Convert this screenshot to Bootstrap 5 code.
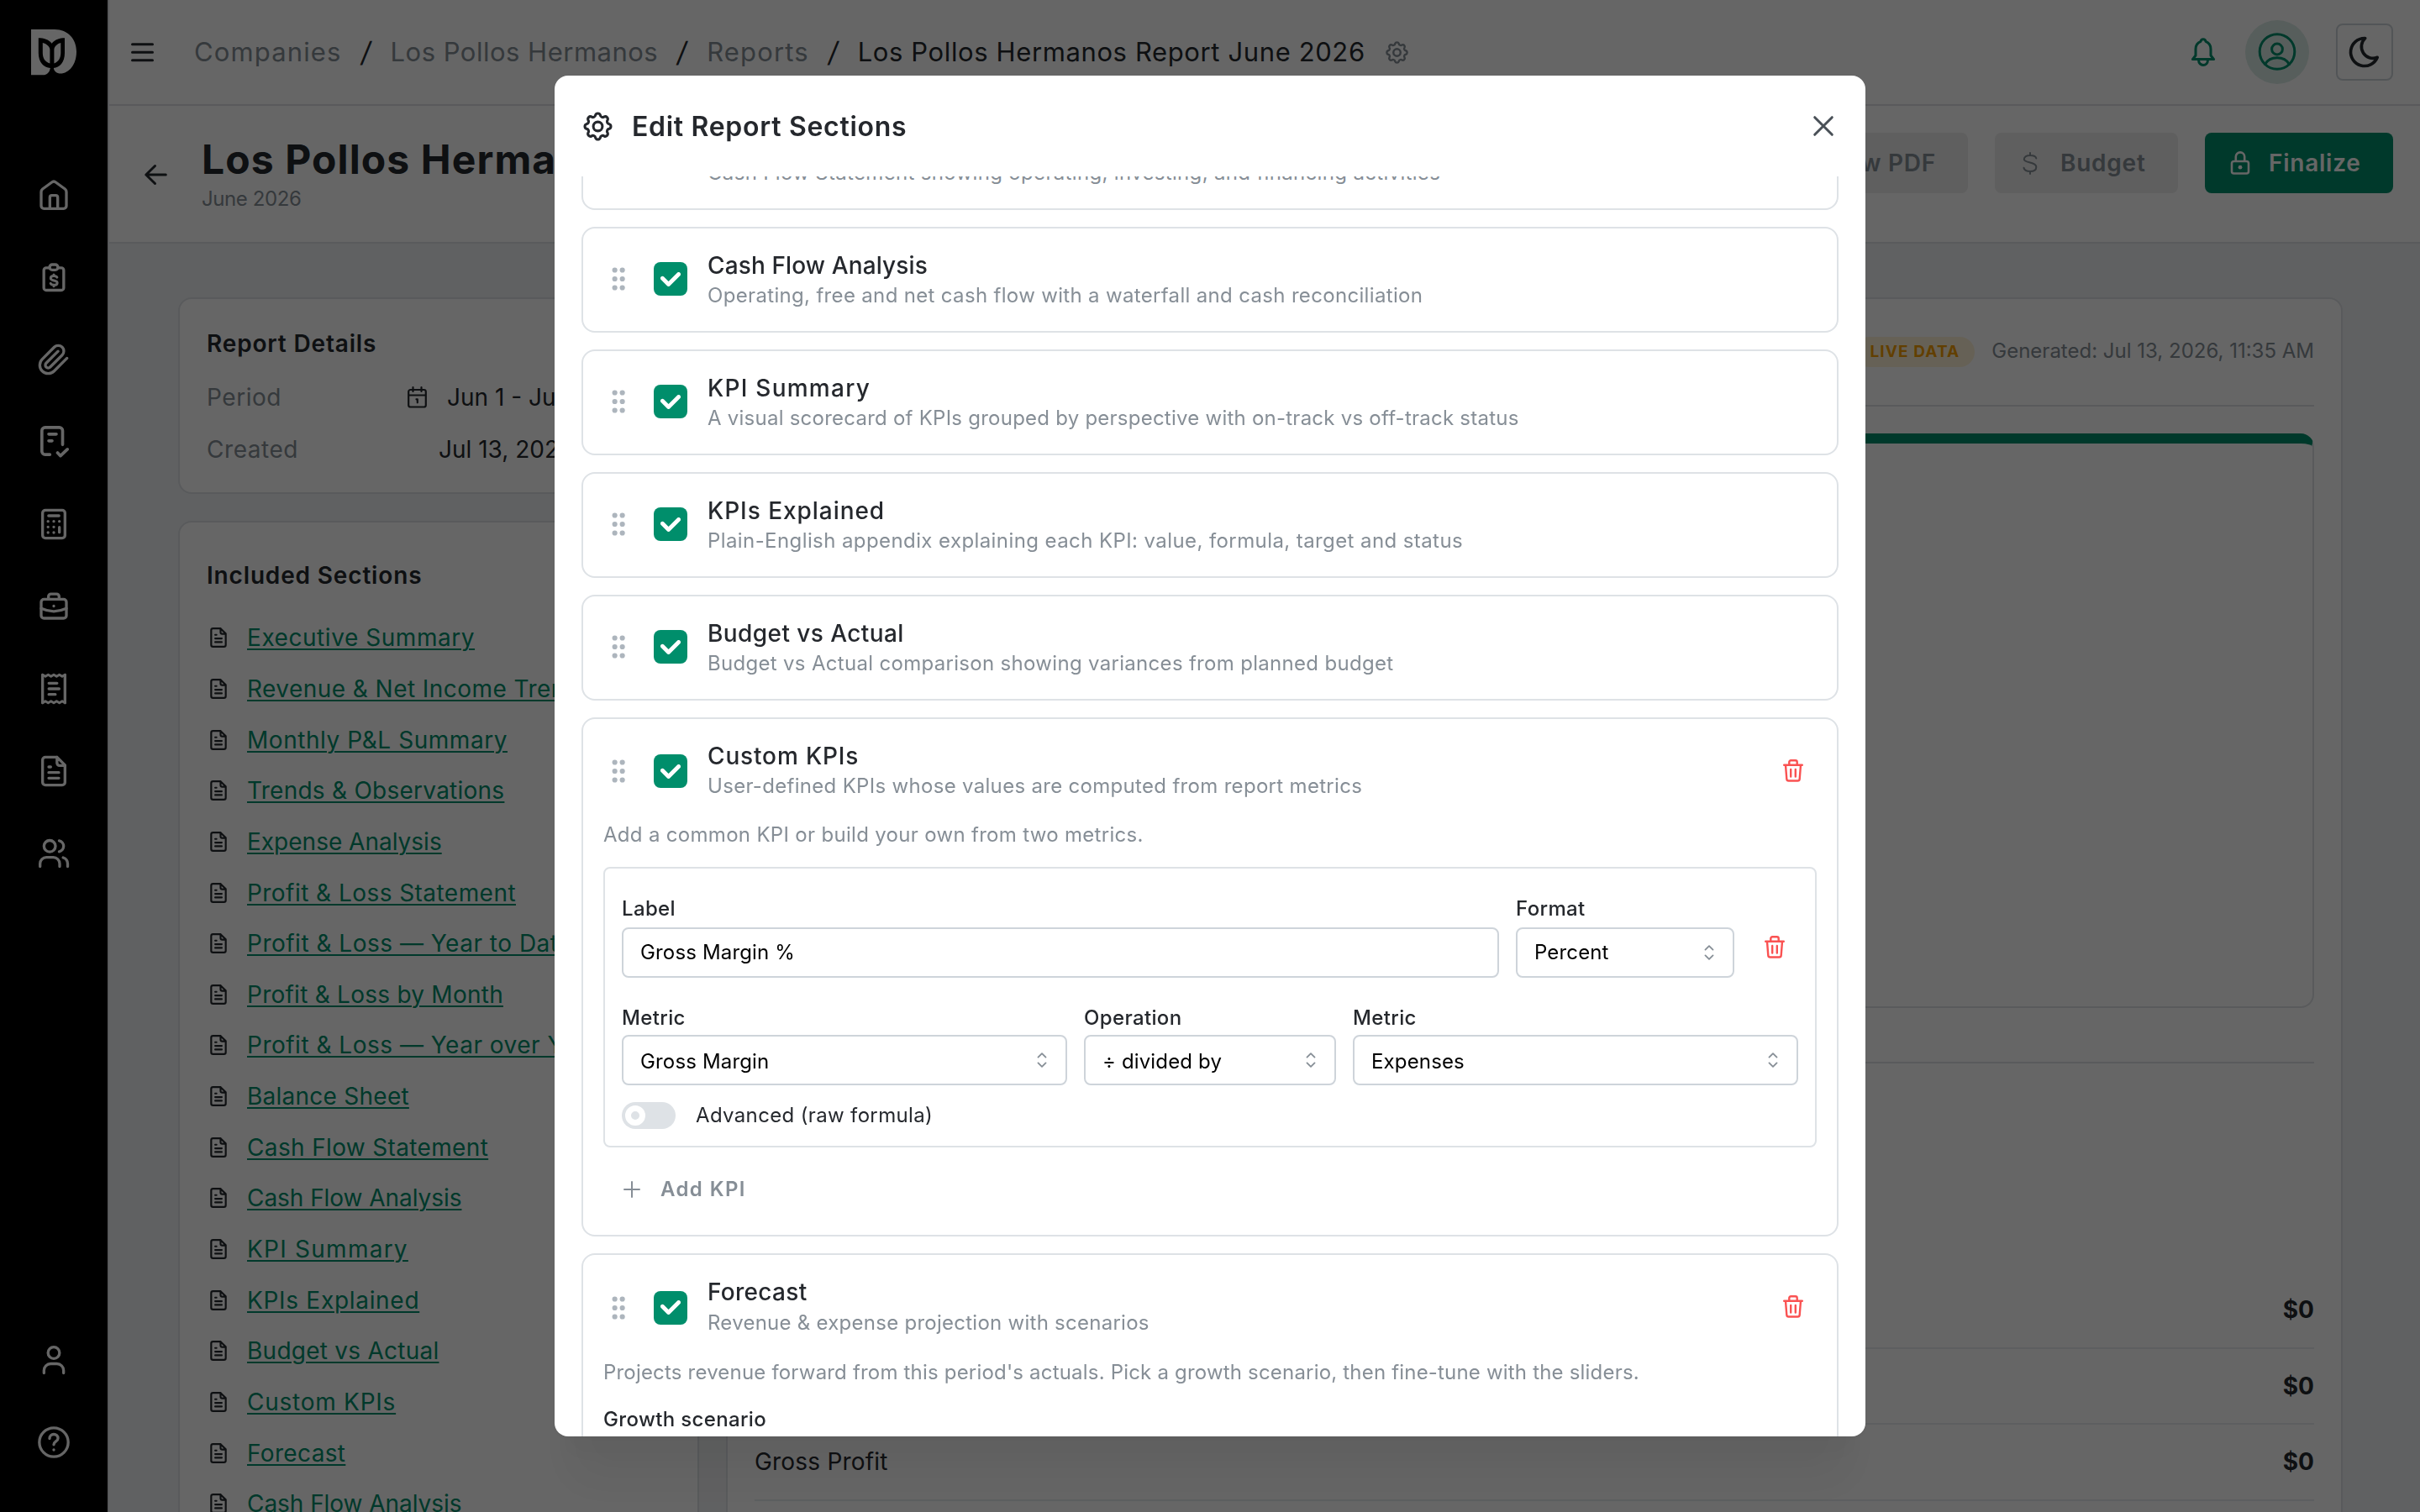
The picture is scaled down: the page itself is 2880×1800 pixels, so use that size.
<!DOCTYPE html>
<html lang="en">
<head>
<meta charset="utf-8">
<title>Los Pollos Hermanos Report June 2026</title>
<link rel="stylesheet" href="https://cdn.jsdelivr.net/npm/bootstrap@5.3.0/dist/css/bootstrap.min.css">
<style>
:root{--green:#008e6b;--ink:#25282d;--dim:#868e96;--line:#dee2e6;--field:#ced4da}
body{font-family:Inter,"Noto Sans",sans-serif;font-size:28px;line-height:36px;letter-spacing:.55px;color:var(--ink);height:1800px;overflow:hidden}
svg{flex:none;fill:none;stroke:currentColor;stroke-width:2;stroke-linecap:round;stroke-linejoin:round;overflow:visible}
.txt-dim{color:var(--dim)}
.shell{height:1800px}
.side{width:130px;background:#000;color:#fff;border-right:2px solid var(--line);padding:35px 0 63px}
.side-nav{width:128px;gap:58px}
.side-nav svg{width:40px;height:40px}
.topbar{height:126px;border-bottom:2px solid var(--line);padding:0 32px 0 26px;background:#fff}
.crumbs{font-size:31px;letter-spacing:1.13px;margin-left:48px}
.crumbs .sep{width:58px;text-align:center;letter-spacing:0;font-size:33px;transform:skewX(-8deg)}
.avatar-disc{width:76px;height:76px;border-radius:50%;background:#d9ebe6;color:var(--green)}
.moon-btn{width:68px;height:68px;border:2px solid var(--field);border-radius:8px}
.titlebar{height:164px;border-bottom:2px solid var(--line);padding:32px 32px 0 42px;background:#fff}
.report-title{font-size:48px;line-height:60px;font-weight:700;letter-spacing:1.1px;margin:0}
.btn-lg2{height:72px;border:0;border-radius:8px;padding:0 38px 0 30px;font-size:28px;font-weight:600;letter-spacing:.75px;display:flex;align-items:center}
.btn-quiet{background:#ededed;color:var(--dim)}
.btn-brand{background:var(--green);color:#fff}
.canvas{flex:1 1 0;min-height:0;background:#f1f3f5;padding:64px 92px 0 82px;gap:32px;overflow:hidden}
.panel{background:#fff;border:2px solid var(--line);border-radius:16px;padding:0 32px}
.left-col{width:620px;gap:32px}
.panel-title{font-weight:600;letter-spacing:.84px}
.sec-row{height:60.65px;gap:21px;padding-left:1px}
.sec-row a{color:var(--green);text-decoration:underline;text-decoration-thickness:2px;text-underline-offset:3px;white-space:nowrap}
.live-tag{height:36px;border-radius:18px;background:#fff3d6;color:#f59f00;font-size:19px;font-weight:700;letter-spacing:1.1px;padding:0 18px;line-height:36px}
.small-dim{font-size:24px;letter-spacing:0;color:var(--dim)}
.chart-box{height:684px;border:2px solid var(--line);border-top:12px solid var(--green);border-radius:16px}
.sum-row{height:90.6px;border-bottom:2px solid #e9ecef}
.sum-row b{letter-spacing:0}
.dlg-layer{background:rgba(0,0,0,.6)}
.dlg-layer .modal-dialog{width:1560px;max-width:1560px;height:1620px;margin:90px auto 0}
.dlg-layer .modal-content{height:1620px;border:0;border-radius:16px;overflow:hidden;color:var(--ink)}
.dlg-shade{border-radius:16px;box-shadow:0 2px 6px rgba(0,0,0,.05),0 72px 56px -14px rgba(0,0,0,.05),0 34px 34px -14px rgba(0,0,0,.04)}
.dlg-head{height:120px;padding:0 38px 0 33px;flex:none}
.dlg-title{font-size:32px;font-weight:600;letter-spacing:.7px;margin-left:22px;padding-top:2px}
.dlg-scroll{flex:1 1 0;min-height:0;overflow:hidden;padding:0 32px}
.dlg-list{gap:20px;margin-top:-86px}
.sect{border:2px solid var(--line);border-radius:16px;padding:26px 24px;flex:none;background:#fff}
.sect-plain{height:126px}
.grip{width:36px;height:36px;color:#adb5bd;fill:currentColor;stroke:none}
.tick{width:40px;height:40px;border-radius:8px;background:var(--green);color:#fff}
.tick svg{fill:currentColor;stroke:none;width:24px;height:17px}
.sect-name{font-weight:500;letter-spacing:.18px;line-height:37px}
.sub{font-size:24px;line-height:32px;letter-spacing:.31px;color:var(--dim)}
.sect-name+.sub{margin-top:1px}
.head-row{gap:24px}
.head-row .grip,.head-row .tick{margin-bottom:2px}
.wide-head .grip,.wide-head .tick{margin:2px 0 0}
.bin{width:56px;color:#fa5252}
.kpi-box{border:2px solid var(--line);border-radius:8px;height:334px;padding:30px 20px 0;margin-top:22px}
.fl{font-size:24px;font-weight:500;letter-spacing:.35px;display:block}
.fld{height:60px;border:2px solid var(--field);border-radius:8px;padding:0 22px 0 20px;font-size:24px;letter-spacing:.15px;color:#000}
.fld svg{width:12px;height:18px;color:var(--dim);stroke-width:1.8}
.w-metric{width:530px}.w-op{width:300px}.w-fmt{width:260px}.w-label{width:1044px}
.row-a .fl{margin-bottom:4px}.row-b .fl{margin-bottom:2px}
.row-b{margin-top:30px}.row-b .fld{padding-top:3px}.row-b .fld svg{margin-top:-3px}
.sw{width:64px;height:32px;border-radius:16px;background:var(--line);padding:0 4px}
.sw i{width:24px;height:24px;border-radius:50%;border:7px solid #fff;background:var(--line)}
.add-kpi{font-size:24px;font-weight:600;letter-spacing:1.4px;color:var(--dim);height:100px;padding-left:24px;gap:24px}
</style>
<script src="https://cdn.jsdelivr.net/npm/bootstrap@5.3.0/dist/js/bootstrap.bundle.min.js"></script>
</head>
<body>
<svg width="0" height="0" class="position-absolute">
  <symbol id="gear" viewBox="0 0 24 24"><path d="M10.15 3.29A1.95 1.95 0 0 1 13.85 3.29A1.9 1.9 0 0 0 16.85 4.54A1.95 1.95 0 0 1 19.46 7.15A1.9 1.9 0 0 0 20.71 10.15A1.95 1.95 0 0 1 20.71 13.85A1.9 1.9 0 0 0 19.46 16.85A1.95 1.95 0 0 1 16.85 19.46A1.9 1.9 0 0 0 13.85 20.71A1.95 1.95 0 0 1 10.15 20.71A1.9 1.9 0 0 0 7.15 19.46A1.95 1.95 0 0 1 4.54 16.85A1.9 1.9 0 0 0 3.29 13.85A1.95 1.95 0 0 1 3.29 10.15A1.9 1.9 0 0 0 4.54 7.15A1.95 1.95 0 0 1 7.15 4.54A1.9 1.9 0 0 0 10.15 3.29Z"/><circle cx="12" cy="12" r="3.5"/></symbol>
  <symbol id="doc" viewBox="0 0 24 24"><path d="M14.3 2H6a2 2 0 0 0-2 2v16a2 2 0 0 0 2 2h12a2 2 0 0 0 2-2V7.7L14.3 2v4.2A1.8 1.8 0 0 0 16.1 8H20M8.4 9h1.4M8.4 13h7.2M8.4 17h7.2"/></symbol>
  <symbol id="bin" viewBox="0 0 24 27"><path stroke-width="2.4" d="M1.2 6.8h21.6M7.3 6.8V3.2a2 2 0 0 1 2-2h5.4a2 2 0 0 1 2 2v3.6M3 6.8l1.3 16.6a2.3 2.3 0 0 0 2.3 2.1h10.8a2.3 2.3 0 0 0 2.3-2.1L21 6.8M9.2 12v8.5M14.8 12v8.5"/></symbol>
  <symbol id="grip" viewBox="0 0 24 24"><circle cx="9.1" cy="5" r="2.05"/><circle cx="9.1" cy="12" r="2.05"/><circle cx="9.1" cy="19" r="2.05"/><circle cx="15.1" cy="5" r="2.05"/><circle cx="15.1" cy="12" r="2.05"/><circle cx="15.1" cy="19" r="2.05"/></symbol>
  <symbol id="check" viewBox="0 0 10 7"><path d="M4 4.586L1.707 2.293A1 1 0 1 0 .293 3.707l3 3a.997.997 0 0 0 1.414 0l5-5A1 1 0 1 0 8.293.293L4 4.586z"/></symbol>
  <symbol id="updown" viewBox="0 0 12 18"><path d="M1.5 5.6L6 1.2l4.5 4.4M1.5 12.4L6 16.8l4.5-4.4"/></symbol>
</svg>

<div class="shell d-flex">
  <aside class="side d-flex flex-column flex-shrink-0">
    <svg width="54" height="55" viewBox="0 0 54 55" style="margin-left:37px;stroke:none">
      <path fill="#fff" d="M0 0H28C44 0 54 11.5 54 26.5C54 42 45 52.5 35 52.5C30.5 52.5 27.5 50 26.8 46H23C22 51 19 54.3 14 54.3H0z"/>
      <path fill="#000" d="M8.8 10.3C15 10.3 21 12 24.6 16.8C28.5 12 34 10.3 40 10.3V28C40 39 34 45.5 26.6 46L27 49L25 54.4L22.2 52L23 46C15 45.5 8.8 39 8.8 28z"/>
      <path fill="#fff" d="M13.8 16C18 17 22.2 20 22.4 24V40.5C17 39 13.8 34.5 13.8 28zM35.3 16C31.3 17 27.7 20 27.4 24V40.5C32 39 35.3 34.5 35.3 28z"/>
    </svg>
    <nav class="side-nav d-flex flex-column align-items-center" style="margin-top:122px">
      <svg viewBox="0 0 24 24"><path d="M3 9.9c0-.9.4-1.6 1-2.1L10.6 3a2.1 2.1 0 0 1 2.8 0L20 7.8c.6.5 1 1.2 1 2.1V19.8a2 2 0 0 1-2 2H5a2 2 0 0 1-2-2zM9.2 21.8V13.8a1.4 1.4 0 0 1 1.4-1.4h2.8a1.4 1.4 0 0 1 1.4 1.4v8"/></svg>
      <svg viewBox="0 0 24 24"><path d="M9 5.3H6.6a1.7 1.7 0 0 0-1.7 1.7v12.6a1.7 1.7 0 0 0 1.7 1.7h10.8a1.7 1.7 0 0 0 1.7-1.7V7a1.7 1.7 0 0 0-1.7-1.7H15"/><rect x="9" y="3" width="6" height="3.8" rx="1.9"/><path d="M14.3 12.1c-.3-.7-1-1-2.3-1-1.4 0-2.2.6-2.2 1.6 0 2.3 4.7 1 4.7 3.3 0 1-.9 1.6-2.4 1.6-1.3 0-2.1-.4-2.4-1.2M12 10.2v.9M12 17.6v.9" stroke-width="1.8"/></svg>
      <svg viewBox="0 0 24 24"><path d="M21.44 11.05l-9.19 9.19a6 6 0 0 1-8.49-8.49l8.57-8.57A4 4 0 1 1 18 8.84l-8.59 8.57a2 2 0 0 1-2.83-2.83l8.49-8.48"/></svg>
      <svg viewBox="0 0 24 24"><path stroke-width="2.2" d="M18.3 14V4a2.3 2.3 0 0 0-2.3-2.3H5.8A2.3 2.3 0 0 0 3.5 4v14.800a2.300 2.300 0 0 0 2.300 2.300h3.400M8.400 6.500h5.400M8.400 11.300h2.400M14.700 19.800l2.100 2.200 4.900-4.700"/></svg>
      <svg viewBox="0 0 24 24"><rect x="4" y="2" width="16" height="20" rx="2"/><path d="M8.3 6h7.400M16 14.200v3.600M7.900 10h.01M12 10h.01M16 10h.01M7.900 14h.01M12 14h.01M7.900 18h.01M12 18h.01"/></svg>
      <svg viewBox="0 0 24 24"><rect x="3" y="6.8" width="18" height="13.6" rx="2"/><path d="M8.2 6.8V4.9A1.8 1.8 0 0 1 10 3.1h4a1.800 1.800 0 0 1 1.800 1.800v1.900M3 13.400c5.800 2.700 12.200 2.700 18 0M12 11.700h.01"/></svg>
      <svg viewBox="0 0 24 24"><path d="M4 2v20M20 2v20M8.500 8h5.800M8.500 12h7.300M8.500 16h4.600"/><path stroke-width="1.8" d="M4 2l2 1.200L8 2l2 1.200L12 2l2 1.200L16 2l2 1.200L20 2M4 22l2-1.200L8 22l2-1.200L12 22l2-1.200L16 22l2-1.200L20 22"/></svg>
      <svg><use href="#doc"/></svg>
      <svg viewBox="0 0 24 24"><circle cx="9.1" cy="6.8" r="4.1"/><path d="M2.2 21.3v-2a4.500 4.500 0 0 1 4.500-4.500h5a4.500 4.500 0 0 1 4.500 4.500v2M15.900 2.900a4 4 0 0 1 0 7.800M18.700 15a4.600 4.600 0 0 1 3.200 4.300v2"/></svg>
    </nav>
    <nav class="side-nav d-flex flex-column align-items-center mt-auto">
      <svg viewBox="0 0 24 24"><circle cx="12" cy="6.9" r="4.1"/><path d="M5 21.3v-1.800a4.800 4.800 0 0 1 4.800-4.800h4.400a4.800 4.800 0 0 1 4.800 4.800v1.800"/></svg>
      <svg viewBox="0 0 24 24"><circle cx="12" cy="12" r="10.3"/><path d="M9 9.300c0-1.800 1.300-3 3-3s3 1.200 3 2.800c0 2.300-3 2.200-3 4.600M12 17.400h.01"/></svg>
    </nav>
  </aside>

  <div class="d-flex flex-column flex-grow-1">
    <header class="topbar d-flex align-items-center">
      <svg width="27" height="23" viewBox="0 0 27 23"><path stroke-width="3" d="M1.500 1.800h24M1.500 11.300h24M1.500 20.800h24"/></svg>
      <div class="crumbs d-flex txt-dim">
        <span>Companies</span><span class="sep" style="color:var(--ink)">/</span>
        <span style="letter-spacing:.5px">Los Pollos Hermanos</span><span class="sep" style="color:var(--ink)">/</span>
        <span>Reports</span><span class="sep" style="color:var(--ink)">/</span>
        <span style="color:var(--ink);letter-spacing:.62px">Los Pollos Hermanos Report June 2026</span>
      </div>
      <svg width="29" height="29" class="txt-dim" style="margin-left:23px"><use href="#gear"/></svg>
      <div class="d-flex align-items-center ms-auto">
        <svg width="34" height="36" viewBox="0 0 34 36" style="color:var(--green);margin-right:33px"><path stroke-width="3" d="M17 2.700c1.600 0 2.700 1 3 2.600c3.600 1.400 6 4.600 6 9.200v7.500l3.600 4.600h-25.200l3.600-4.600v-7.500c0-4.600 2.400-7.800 6-9.200c.3-1.600 1.400-2.600 3-2.600zM11.600 27v1a5.400 5.400 0 0 0 10.800 0v-1"/></svg>
        <div class="avatar-disc d-flex align-items-center justify-content-center"><svg width="45" height="45" viewBox="0 0 45 45"><g stroke-width="3"><circle cx="22" cy="21.500" r="20.800"/><circle cx="22" cy="18.500" r="6.400"/><path d="M7.500 36.500C10.500 31.500 15.500 28.800 22 28.800S33.500 31.500 36.500 36.500"/></g></svg></div>
        <div class="moon-btn d-flex align-items-center justify-content-center" style="margin-left:32px"><svg width="44" height="44" viewBox="0 0 24 24"><path d="M12 3h.393a7.500 7.500 0 0 0 7.920 12.446A9 9 0 1 1 12 2.992z"/></svg></div>
      </div>
    </header>

    <div class="titlebar d-flex align-items-start">
      <svg width="27" height="24" viewBox="0 0 27 24" style="margin-top:38px"><path stroke-width="3" d="M1.800 12h23.500M12.500 1.500L1.800 12l10.700 10.500"/></svg>
      <div style="margin-left:41px;margin-top:2px">
        <h1 class="report-title text-nowrap">Los Pollos Hermanos Report June 2026</h1>
        <div class="small-dim" style="letter-spacing:-.4px;line-height:34px">June 2026</div>
      </div>
      <div class="d-flex ms-auto" style="gap:32px">
        <button class="btn-lg2 btn-quiet text-nowrap" type="button">View PDF</button>
        <button class="btn-lg2 btn-quiet" type="button" style="width:218px;padding:0 0 0 33px"><svg width="18" height="27" viewBox="0 0 18 27" style="margin-right:27px"><path d="M16.300 7.500C15.800 5 13 4 9 4S1.800 5.400 1.800 8.700C1.800 13 16.300 11.500 16.300 17.700c0 3.500-3 5.300-7.300 5.300S2 21.500 1.500 18.800M9 1v3M9 23v3"/></svg>Budget</button>
        <button class="btn-lg2 btn-brand" type="button" style="width:224px;padding-right:0"><svg width="24" height="28" viewBox="0 0 24 28" style="margin-right:22px"><path stroke-width="2.600" d="M4.500 12h15a2.500 2.500 0 0 1 2.500 2.500V24a2.500 2.500 0 0 1-2.500 2.500h-15A2.500 2.500 0 0 1 2 24v-9.500A2.500 2.500 0 0 1 4.500 12zM6.800 12V6.600a5.200 5.200 0 0 1 10.400 0V12"/><circle cx="12" cy="19.200" r="2.400" fill="currentColor" stroke="none"/></svg>Finalize</button>
      </div>
    </div>

    <div class="canvas d-flex">
      <div class="left-col d-flex flex-column flex-shrink-0">
        <section class="panel flex-shrink-0" style="height:234px;padding-top:35px">
          <div class="panel-title">Report Details</div>
          <div class="d-flex justify-content-between" style="margin-top:28px"><span class="txt-dim">Period</span><span class="d-flex align-items-center text-nowrap" style="width:313px"><svg width="23" height="26" viewBox="0 0 23 26" style="margin-right:24px"><path stroke-width="2.200" d="M1.200 10.500h20.600M3.500 4h16a2.300 2.300 0 0 1 2.300 2.300v15.900a2.300 2.300 0 0 1-2.300 2.300h-16a2.300 2.300 0 0 1-2.300-2.300V6.300A2.300 2.300 0 0 1 3.500 4zM6.500 1.200V6M16.500 1.200V6M10.500 15.300h1.300v4"/></svg><span style="letter-spacing:0">Jun 1 - Jun 30, 2026</span></span></div>
          <div class="d-flex justify-content-between" style="margin-top:26px"><span class="txt-dim">Created</span><span style="width:276px;letter-spacing:0" class="text-nowrap">Jul 13, 2026, 11:35</span></div>
        </section>
        <section class="panel flex-grow-1" style="padding-top:45px;height:1300px">
          <div class="panel-title" style="margin-bottom:26px">Included Sections</div>
          <div id="secs"></div>
        </section>
      </div>

      <section class="panel flex-grow-1" style="height:1600px">
        <div class="d-flex justify-content-end align-items-center" style="height:128px;border-bottom:2px solid var(--line)">
          <span class="live-tag">LIVE DATA</span><span class="small-dim" style="margin-left:20px;margin-top:-2px">Generated: Jul 13, 2026, 11:35 AM</span>
        </div>
        <div class="chart-box" style="margin-top:32px"></div>
        <div style="height:66px;border-bottom:2px solid var(--line)"></div>
        <div style="height:249px"></div>
        <div class="sum-row d-flex justify-content-between align-items-center"><span>Revenue</span><b>$0</b></div>
        <div class="sum-row d-flex justify-content-between align-items-center"><span>Cost of Goods Sold</span><b>$0</b></div>
        <div class="sum-row d-flex justify-content-between align-items-center"><span style="letter-spacing:.2px">Gross Profit</span><b>$0</b></div>
      </section>
    </div>
  </div>
</div>

<div class="modal d-block dlg-layer" tabindex="-1">
  <div class="modal-dialog"><div class="dlg-shade"><div class="modal-content">
    <div class="dlg-head d-flex align-items-center">
      <svg width="37" height="37"><use href="#gear"/></svg>
      <div class="dlg-title">Edit Report Sections</div>
      <svg class="ms-auto" width="24" height="24" viewBox="0 0 24 24" style="color:#495057"><path stroke-width="3" d="M1.700 1.700l20.600 20.600M22.300 1.700L1.700 22.300"/></svg>
    </div>
    <div class="dlg-scroll">
      <div class="dlg-list d-flex flex-column" id="plain"></div>
      <div class="d-flex flex-column" style="gap:20px;margin-top:20px">
        <div class="sect" style="height:618px;padding-bottom:0">
          <div class="head-row wide-head d-flex align-items-center">
            <svg class="grip"><use href="#grip"/></svg><div class="tick d-flex align-items-center justify-content-center"><svg><use href="#check"/></svg></div>
            <div><div class="sect-name" style="letter-spacing:.85px">Custom KPIs</div><div class="sub">User-defined KPIs whose values are computed from report metrics</div></div>
            <div class="bin ms-auto d-flex justify-content-center"><svg width="24" height="27"><use href="#bin"/></svg></div>
          </div>
          <div class="sub" style="margin-top:26px">Add a common KPI or build your own from two metrics.</div>
          <div class="kpi-box">
            <div class="row-a d-flex" style="gap:20px">
              <div class="w-label"><span class="fl">Label</span><div class="fld d-flex align-items-center">Gross Margin %</div></div>
              <div class="w-fmt"><span class="fl">Format</span><div class="fld d-flex align-items-center justify-content-between">Percent<svg><use href="#updown"/></svg></div></div>
              <div class="bin d-flex justify-content-center" style="padding-top:50px"><svg width="24" height="27"><use href="#bin"/></svg></div>
            </div>
            <div class="row-b d-flex" style="gap:20px">
              <div class="w-metric"><span class="fl">Metric</span><div class="fld d-flex align-items-center justify-content-between">Gross Margin<svg><use href="#updown"/></svg></div></div>
              <div class="w-op"><span class="fl">Operation</span><div class="fld d-flex align-items-center justify-content-between">÷ divided by<svg><use href="#updown"/></svg></div></div>
              <div class="w-metric"><span class="fl">Metric</span><div class="fld d-flex align-items-center justify-content-between">Expenses<svg><use href="#updown"/></svg></div></div>
            </div>
            <div class="d-flex align-items-center" style="margin-top:20px;height:32px"><span class="sw d-flex align-items-center"><i></i></span><span style="margin-left:24px;font-size:24px;letter-spacing:.35px">Advanced (raw formula)</span></div>
          </div>
          <div class="add-kpi d-flex align-items-center"><svg width="20" height="20" viewBox="0 0 20 20"><path d="M10 1v18M1 10h18"/></svg>Add KPI</div>
        </div>
        <div class="sect" style="height:420px">
          <div class="head-row wide-head d-flex align-items-center">
            <svg class="grip"><use href="#grip"/></svg><div class="tick d-flex align-items-center justify-content-center"><svg><use href="#check"/></svg></div>
            <div><div class="sect-name" style="letter-spacing:.3px">Forecast</div><div class="sub" style="letter-spacing:.26px;padding-top:1px">Revenue &amp; expense projection with scenarios</div></div>
            <div class="bin ms-auto d-flex justify-content-center"><svg width="24" height="27"><use href="#bin"/></svg></div>
          </div>
          <div class="sub" style="margin-top:27px;letter-spacing:.19px">Projects revenue forward from this period's actuals. Pick a growth scenario, then fine-tune with the sliders.</div>
          <span class="fl" style="margin-top:22px">Growth scenario</span>
        </div>
      </div>
    </div>
  </div></div></div>
</div>

<script>
// [label, letter-spacing]
document.getElementById('secs').innerHTML = [['Executive Summary',.55],['Revenue & Net Income Trends',.45],['Monthly P&L Summary',.55],['Trends & Observations',.25],['Expense Analysis',0],['Profit & Loss Statement',.45],['Profit & Loss — Year to Date',.5],['Profit & Loss by Month',.25],['Profit & Loss — Year over Year',.5],['Balance Sheet',.25],['Cash Flow Statement',.35],['Cash Flow Analysis',-.05],['KPI Summary',1.25],['KPIs Explained',.7],['Budget vs Actual',.25],['Custom KPIs',.75],['Forecast',.35],['Cash Flow Analysis',-.05]]
  .map(([t,s]) => `<div class="sec-row d-flex align-items-center"><svg width="26" height="26"><use href="#doc"/></svg><a href="#" style="letter-spacing:${s}px">${t.replace(/&/g,'&amp;')}</a></div>`).join('');
// [name, spacing, description, spacing]
document.getElementById('plain').innerHTML = [
  ['Cash Flow Statement',.2,'Cash Flow Statement showing operating, investing, and financing activities',.33],
  ['Cash Flow Analysis',.12,'Operating, free and net cash flow with a waterfall and cash reconciliation',.33],
  ['KPI Summary',1.25,'A visual scorecard of KPIs grouped by perspective with on-track vs off-track status',.24],
  ['KPIs Explained',.95,'Plain-English appendix explaining each KPI: value, formula, target and status',.41],
  ['Budget vs Actual',.42,'Budget vs Actual comparison showing variances from planned budget',.31]
].map(([n,a,d,b]) => `<div class="sect sect-plain"><div class="head-row d-flex align-items-center"><svg class="grip"><use href="#grip"/></svg><div class="tick d-flex align-items-center justify-content-center"><svg><use href="#check"/></svg></div><div><div class="sect-name" style="letter-spacing:${a}px">${n}</div><div class="sub" style="letter-spacing:${b}px">${d}</div></div></div></div>`).join('');
</script>
</body>
</html>
